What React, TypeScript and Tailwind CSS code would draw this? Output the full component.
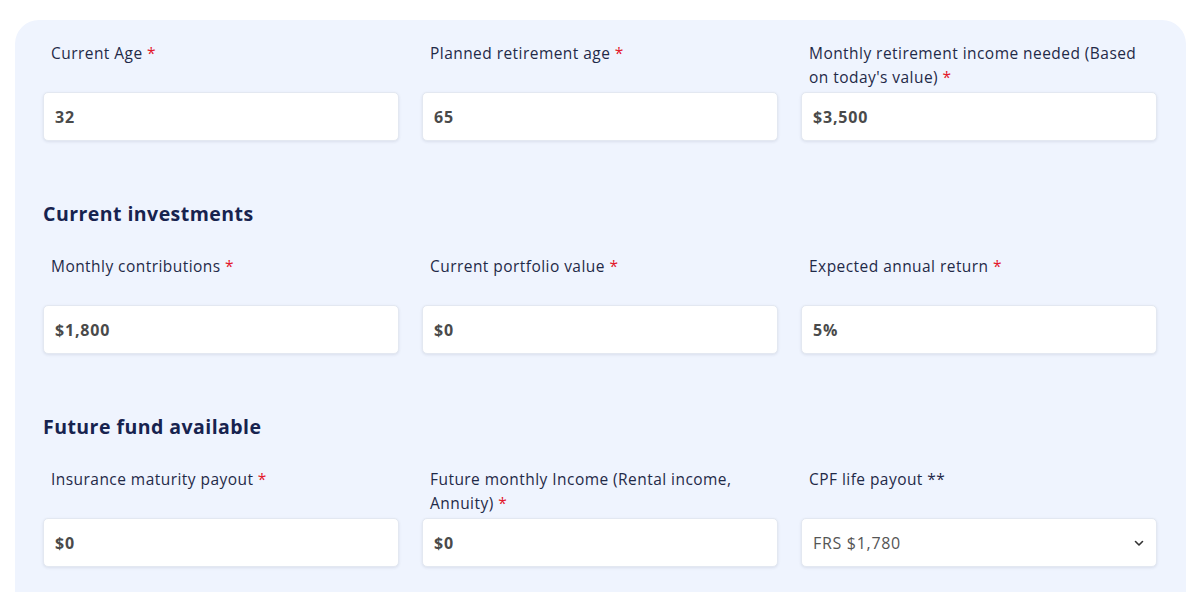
import React from "react";

const font = { fontFamily: '"Open Sans", "Noto Sans", sans-serif' };

function Field({ label, value, select }: { label: string; value: string; select?: boolean }) {
  const req = !label.endsWith("**");
  return (
    <div className="flex flex-col">
      <div className="h-[48px] mb-[3px] pl-[8px] pr-[6px] text-[15.5px] leading-[24px] text-[#1f2a48] tracking-[0.45px]">
        {label}
        {req ? <span className="text-[#e3162b]">{"\u00a0*"}</span> : null}
      </div>
      <div className="h-[49px] bg-white rounded-[5px] border border-[#e3e8f1] shadow-[0_1px_3px_rgba(30,40,80,0.10)] flex items-center pl-[11px] pr-[11px]">
        {select ? (
          <>
            <span className="flex-1 text-[16px] text-[#555555] tracking-[0.7px]">{value}</span>
            <svg width="12" height="12" viewBox="0 0 12 12" fill="none">
              <path d="M2.5 4.5L6 8L9.5 4.5" stroke="#333" strokeWidth="1.6" strokeLinecap="round" strokeLinejoin="round" />
            </svg>
          </>
        ) : (
          <span className="text-[16px] font-bold text-[#4a4a4a] tracking-[0.8px]">{value}</span>
        )}
      </div>
    </div>
  );
}

function Heading({ children }: { children: React.ReactNode }) {
  return (
    <h2 className="mt-[59px] mb-[26px] h-[28px] leading-[28px] text-[19.5px] font-bold text-[#17234f] tracking-[0.45px]">
      {children}
    </h2>
  );
}

export default function App() {
  return (
    <div className="w-[1200px] h-[592px] overflow-hidden bg-white pt-[20px] pl-[15px]" style={font}>
      <div className="w-[1171px] h-[620px] bg-[#eff4fe] rounded-[24px] pt-[21px] pl-[28px] pr-[29px]">
        <div className="grid grid-cols-3 gap-x-[23px]">
          <Field label="Current Age" value="32" />
          <Field label="Planned retirement age" value="65" />
          <Field label="Monthly retirement income needed (Based on today's value)" value="$3,500" />
        </div>
        <Heading>Current investments</Heading>
        <div className="grid grid-cols-3 gap-x-[23px]">
          <Field label="Monthly contributions" value="$1,800" />
          <Field label="Current portfolio value" value="$0" />
          <Field label="Expected annual return" value="5%" />
        </div>
        <Heading>Future fund available</Heading>
        <div className="grid grid-cols-3 gap-x-[23px]">
          <Field label="Insurance maturity payout" value="$0" />
          <Field label="Future monthly Income (Rental income, Annuity)" value="$0" />
          <Field label="CPF life payout **" value="FRS $1,780" select />
        </div>
      </div>
    </div>
  );
}
